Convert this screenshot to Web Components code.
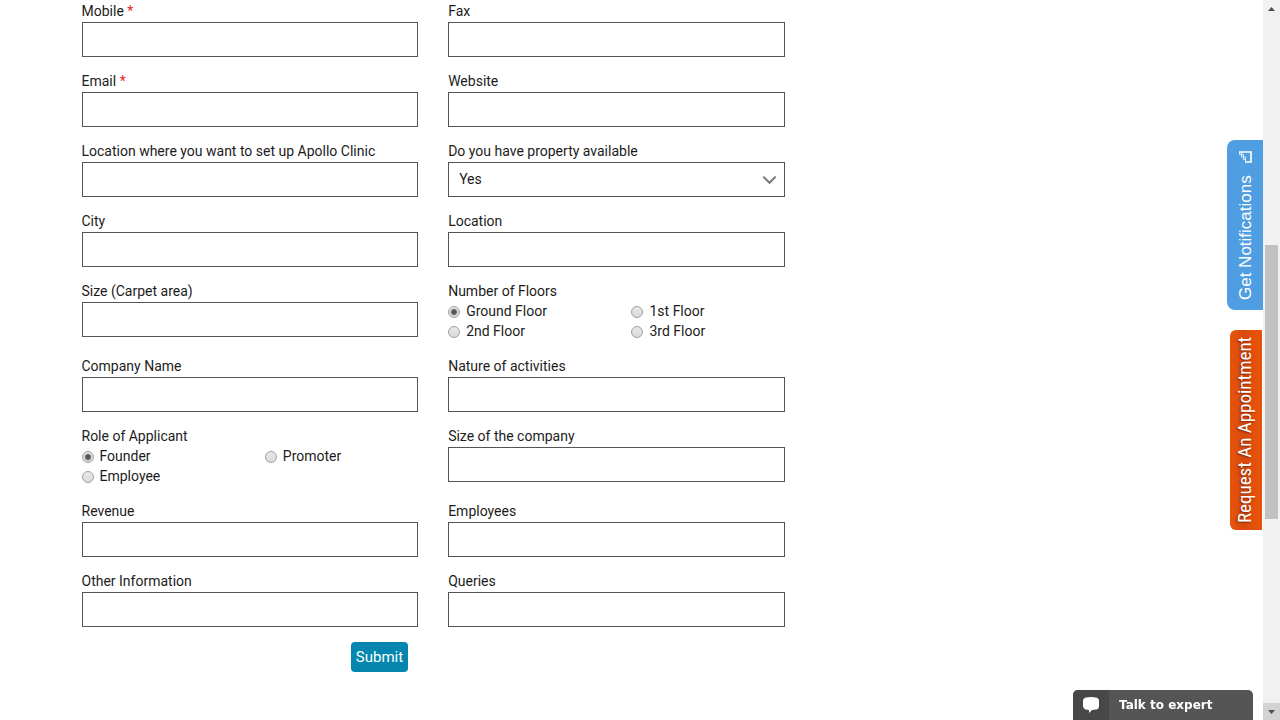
<!DOCTYPE html>
<html lang="en">
<head>
<meta charset="utf-8">
<title>Apollo Clinic - Franchise Enquiry</title>
<style>
  body { margin: 0; background: #fff; color: #1c1c1c; font: 14px/18px Roboto, Arial, sans-serif; }
</style>
</head>
<body>
<page-shell>
  <enquiry-form>
    <text-field label="Mobile" required></text-field>
    <text-field label="Fax"></text-field>
    <text-field label="Email" type="email" required></text-field>
    <text-field label="Website"></text-field>
    <text-field label="Location where you want to set up Apollo Clinic"></text-field>
    <select-field label="Do you have property available" options="Yes|No"></select-field>
    <text-field label="City"></text-field>
    <text-field label="Location"></text-field>
    <text-field label="Size (Carpet area)"></text-field>
    <radio-field label="Number of Floors" options="Ground Floor|1st Floor|2nd Floor|3rd Floor"></radio-field>
    <text-field label="Company Name"></text-field>
    <text-field label="Nature of activities"></text-field>
    <radio-field label="Role of Applicant" options="Founder|Promoter|Employee"></radio-field>
    <text-field label="Size of the company"></text-field>
    <text-field label="Revenue"></text-field>
    <text-field label="Employees"></text-field>
    <text-field label="Other Information"></text-field>
    <text-field label="Queries"></text-field>
  </enquiry-form>
  <side-tabs slot="overlay"></side-tabs>
  <chat-bar slot="overlay">Talk to expert</chat-bar>
  <scroll-rail slot="rail"></scroll-rail>
</page-shell>

<script>
const define = (name, html) => customElements.define(name, class extends HTMLElement {
  connectedCallback() {
    if (this.shadowRoot) return;
    const t = document.createElement('template');
    t.innerHTML = typeof html === 'function' ? html(this) : html;
    this.attachShadow({ mode: 'open' }).append(t.content.cloneNode(true));
  }
});

define('page-shell', `
  <style>
    :host { display: grid; grid-template-columns: 1fr 17px; min-height: 100vh; }
    main { width: 100%; max-width: 1100px; margin: 0 auto; display: grid; grid-template-columns: 2fr 1fr; align-items: start; padding-top: 2px; box-sizing: border-box; }
  </style>
  <main><slot></slot></main>
  <slot name="rail"></slot>
  <slot name="overlay"></slot>`);

define('enquiry-form', `
  <style>
    :host { display: block; padding-right: 30px; }
    .fields { display: grid; grid-template-columns: 1fr 1fr; column-gap: 30px; row-gap: 15px; }
    .actions { display: grid; grid-template-columns: 1fr 1fr; column-gap: 30px; margin-top: 15px; }
    button { justify-self: end; margin: 0 10px 0 0; height: 30px; padding: 0 5px; border: 0; border-radius: 4px; background: #0486af; color: #fff; font: 15px/30px Roboto, Arial, sans-serif; cursor: pointer; }
  </style>
  <form>
    <div class="fields"><slot></slot></div>
    <div class="actions"><button type="button">Submit</button></div>
  </form>`);

const fieldStyle = `
    :host { display: block; }
    label, legend { display: block; padding: 0; margin-bottom: 2px; }
    .req { color: #ec1c2e; }
    input[type=text], input[type=email], select { display: block; box-sizing: border-box; width: 100%; height: 35px; margin: 0; padding: 0 10px 2px; border: 1px solid #555; border-radius: 0; background: #fff; color: inherit; font: inherit; outline: 0; }`;

define('text-field', el => `
  <style>${fieldStyle}</style>
  <label for="f">${el.getAttribute('label')}${el.hasAttribute('required') ? ' <span class="req">*</span>' : ''}</label>
  <input id="f" type="${el.getAttribute('type') || 'text'}">`);

define('select-field', el => `
  <style>${fieldStyle}
    .box { position: relative; }
    select { appearance: none; }
    svg { position: absolute; right: 8px; top: 13px; pointer-events: none; }
  </style>
  <label for="f">${el.getAttribute('label')}</label>
  <div class="box">
    <select id="f">${el.getAttribute('options').split('|').map(o => `<option>${o}</option>`).join('')}</select>
    <svg width="15" height="10" viewBox="0 0 15 10" fill="none" stroke="#777" stroke-width="2"><path d="M1.3 1.6 7.5 7.8 13.7 1.6"/></svg>
  </div>`);

define('radio-field', el => `
  <style>${fieldStyle}
    fieldset { margin: 0; padding: 0; border: 0; min-width: 0; }
    .options { display: grid; grid-template-columns: 1fr 1fr; column-gap: 30px; row-gap: 2px; padding-bottom: 2px; }
    .options label { display: flex; align-items: center; gap: 6px; margin: 0; }
    input { appearance: none; flex: none; width: 12px; height: 12px; margin: 2px 0 0; box-sizing: border-box; border: 1px solid #a0a0a0; border-radius: 50%; background: linear-gradient(#e8e8e8, #dadada); }
    input:checked { background: radial-gradient(circle, #555 0 2px, transparent 4px), linear-gradient(#ededed, #dcdcdc); }
  </style>
  <fieldset>
    <legend>${el.getAttribute('label')}</legend>
    <div class="options">${el.getAttribute('options').split('|').map((o, i) => `
      <label><input type="radio" name="choice"${i ? '' : ' checked'}><span>${o}</span></label>`).join('')}
    </div>
  </fieldset>`);

define('side-tabs', `
  <style>
    :host { position: fixed; right: 17px; top: 140px; display: flex; flex-direction: column; align-items: flex-end; gap: 20px; }
    button { display: flex; align-items: center; box-sizing: border-box; margin: 0; border: 0; color: #fff; writing-mode: vertical-rl; transform: rotate(180deg); white-space: nowrap; cursor: pointer; }
    .notify { width: 36px; height: 170px; padding: 10px 2px 10px 0; gap: 12px; border-radius: 0 8px 8px 0; background: #4f9ee1; font: 17px/34px "Liberation Sans", Arial, sans-serif; }
    .appoint { width: 32px; height: 200px; margin-right: 1px; padding: 0 0 0 2px; justify-content: center; border-radius: 0 6px 6px 0; background: linear-gradient(to right, #e9540b, #e04e0c 40%, #d84a10 55%, #e9540b); font: 19px/30px "Roboto Condensed", Roboto, Arial, sans-serif; text-shadow: -1px -1px 2px #7a2600; }
    svg { display: block; transform: rotate(180deg); }
  </style>
  <button class="notify" type="button"><span>Get Notifications</span>
    <svg width="13" height="12" viewBox="0 0 13 12" fill="none" stroke="#fff"><path d="M0 1H12V11H6" stroke-width="1.6"/><path d="M.5 1V3.5H2.5V6H4.5V8.5H6.5V11M2.5 1V3.5H4.5V6H6.5V8.5" stroke-width=".8"/></svg>
  </button>
  <button class="appoint" type="button">Request An Appointment</button>`);

define('chat-bar', `
  <style>
    :host { position: fixed; right: 27px; bottom: 0; display: block; width: 180px; }
    button { display: flex; align-items: stretch; width: 100%; height: 30px; margin: 0; padding: 0; border: 0; border-radius: 5px 5px 0 0; overflow: hidden; background: #555; color: #fff; font: bold 12px/30px "DejaVu Sans", Verdana, sans-serif; cursor: pointer; }
    .icon { display: flex; align-items: center; justify-content: center; width: 36px; background: #484848; }
    .text { padding-left: 10px; }
  </style>
  <button type="button">
    <span class="icon"><svg width="18" height="16" viewBox="0 0 18 16" fill="#fff"><path d="M4 .5Q9-.4 14 .5 17 1 17 4V9Q17 12 14 12.6L10 13 7 16V13Q5 13 3.5 12.6 1 12 1 9V4Q1 1 4 .5Z"/></svg></span>
    <span class="text"><slot></slot></span>
  </button>`);

define('scroll-rail', `
  <style>
    :host { display: flex; flex-direction: column; background: #f1f1f1; }
    .end { display: flex; align-items: center; justify-content: center; height: 17px; }
    .down { background: #d2d2d2; }
    .before { flex: 228; }
    .thumb { flex: 274; margin: 0 2px; background: #c1c1c1; }
    .after { flex: 184; }
  </style>
  <div class="end"><svg width="7" height="4" viewBox="0 0 7 4" fill="#505050"><path d="M0 4 3.5 0 7 4z"/></svg></div>
  <div class="before"></div><div class="thumb"></div><div class="after"></div>
  <div class="end down"><svg width="7" height="4" viewBox="0 0 7 4" fill="#505050"><path d="M0 0 3.5 4 7 0z"/></svg></div>`);
</script>
</body>
</html>
